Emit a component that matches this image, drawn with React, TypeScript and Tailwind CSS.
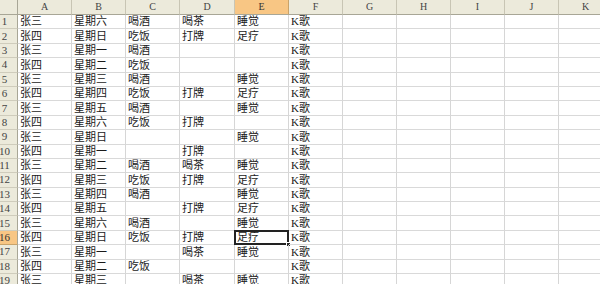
import React from "react";

const cols = ["A", "B", "C", "D", "E", "F", "G", "H", "I", "J", "K"];
const widths = [54, 54, 54, 55, 54, 54, 54, 54, 54, 54, 54];

const rows: string[][] = [
  ["张三", "星期六", "喝酒", "喝茶", "睡觉", "K歌"],
  ["张四", "星期日", "吃饭", "打牌", "足疗", "K歌"],
  ["张三", "星期一", "喝酒", "", "", "K歌"],
  ["张四", "星期二", "吃饭", "", "", "K歌"],
  ["张三", "星期三", "喝酒", "", "睡觉", "K歌"],
  ["张四", "星期四", "吃饭", "打牌", "足疗", "K歌"],
  ["张三", "星期五", "喝酒", "", "睡觉", "K歌"],
  ["张四", "星期六", "吃饭", "打牌", "", "K歌"],
  ["张三", "星期日", "", "", "睡觉", "K歌"],
  ["张四", "星期一", "", "打牌", "", "K歌"],
  ["张三", "星期二", "喝酒", "喝茶", "睡觉", "K歌"],
  ["张四", "星期三", "吃饭", "打牌", "足疗", "K歌"],
  ["张三", "星期四", "喝酒", "", "睡觉", "K歌"],
  ["张四", "星期五", "", "打牌", "足疗", "K歌"],
  ["张三", "星期六", "喝酒", "", "睡觉", "K歌"],
  ["张四", "星期日", "吃饭", "打牌", "足疗", "K歌"],
  ["张三", "星期一", "", "喝茶", "睡觉", "K歌"],
  ["张四", "星期二", "吃饭", "", "", "K歌"],
  ["张三", "星期三", "", "喝茶", "睡觉", "K歌"],
];

const activeRow = 15;
const activeCol = 4;

const App = () => {
  return (
    <div
      className="w-[600px] h-[284px] overflow-hidden bg-white text-[#1a1a1a]"
      style={{ fontFamily: '"Liberation Serif", "Noto Sans CJK SC", serif' }}
    >
      <div className="flex h-[15px]">
        <div className="w-[18px] shrink-0 bg-[#eceadb] border-r border-b border-[#a8a696]" />
        {cols.map((c, i) => (
          <div
            key={c}
            style={{ width: widths[i] }}
            className={
              "shrink-0 flex items-center justify-center text-[10px] leading-none border-r border-b " +
              (i === activeCol
                ? "bg-[#f8c684] border-r-[#c9a36a] border-b-[#a8a696] text-[#333]"
                : "bg-[#eceadb] border-r-[#c8c5b4] border-b-[#a8a696] text-[#444]")
            }
          >
            {c}
          </div>
        ))}
      </div>
      {rows.map((r, ri) => (
        <div key={ri} className="flex h-[14.4px]">
          <div
            className={
              "w-[18px] shrink-0 flex items-center justify-center pr-[8px] text-[11px] leading-none border-r border-b " +
              (ri === activeRow
                ? "bg-[#f8c684] border-r-[#a8a696] border-b-[#c9a36a] text-[#333]"
                : "bg-[#eceadb] border-r-[#a8a696] border-b-[#cfccbc] text-[#444]")
            }
          >
            {ri + 1}
          </div>
          {cols.map((c, ci) => (
            <div
              key={c}
              style={{ width: widths[ci] }}
              className="relative shrink-0 flex items-end pl-[2px] pb-[1px] text-[11px] leading-none whitespace-nowrap border-r border-b border-r-[#d6d6d6] border-b-[#d9d9d9]"
            >
              {r[ci] ?? ""}
              {ri === activeRow && ci === activeCol && (
                <>
                  <div className="absolute left-[-1px] top-[-1px] right-[-1px] bottom-[-1px] border-2 border-[#222]" />
                  <div className="absolute right-[-3px] bottom-[-3px] w-[5px] h-[5px] bg-[#222] border border-white" />
                </>
              )}
            </div>
          ))}
        </div>
      ))}
    </div>
  );
};

export default App;
